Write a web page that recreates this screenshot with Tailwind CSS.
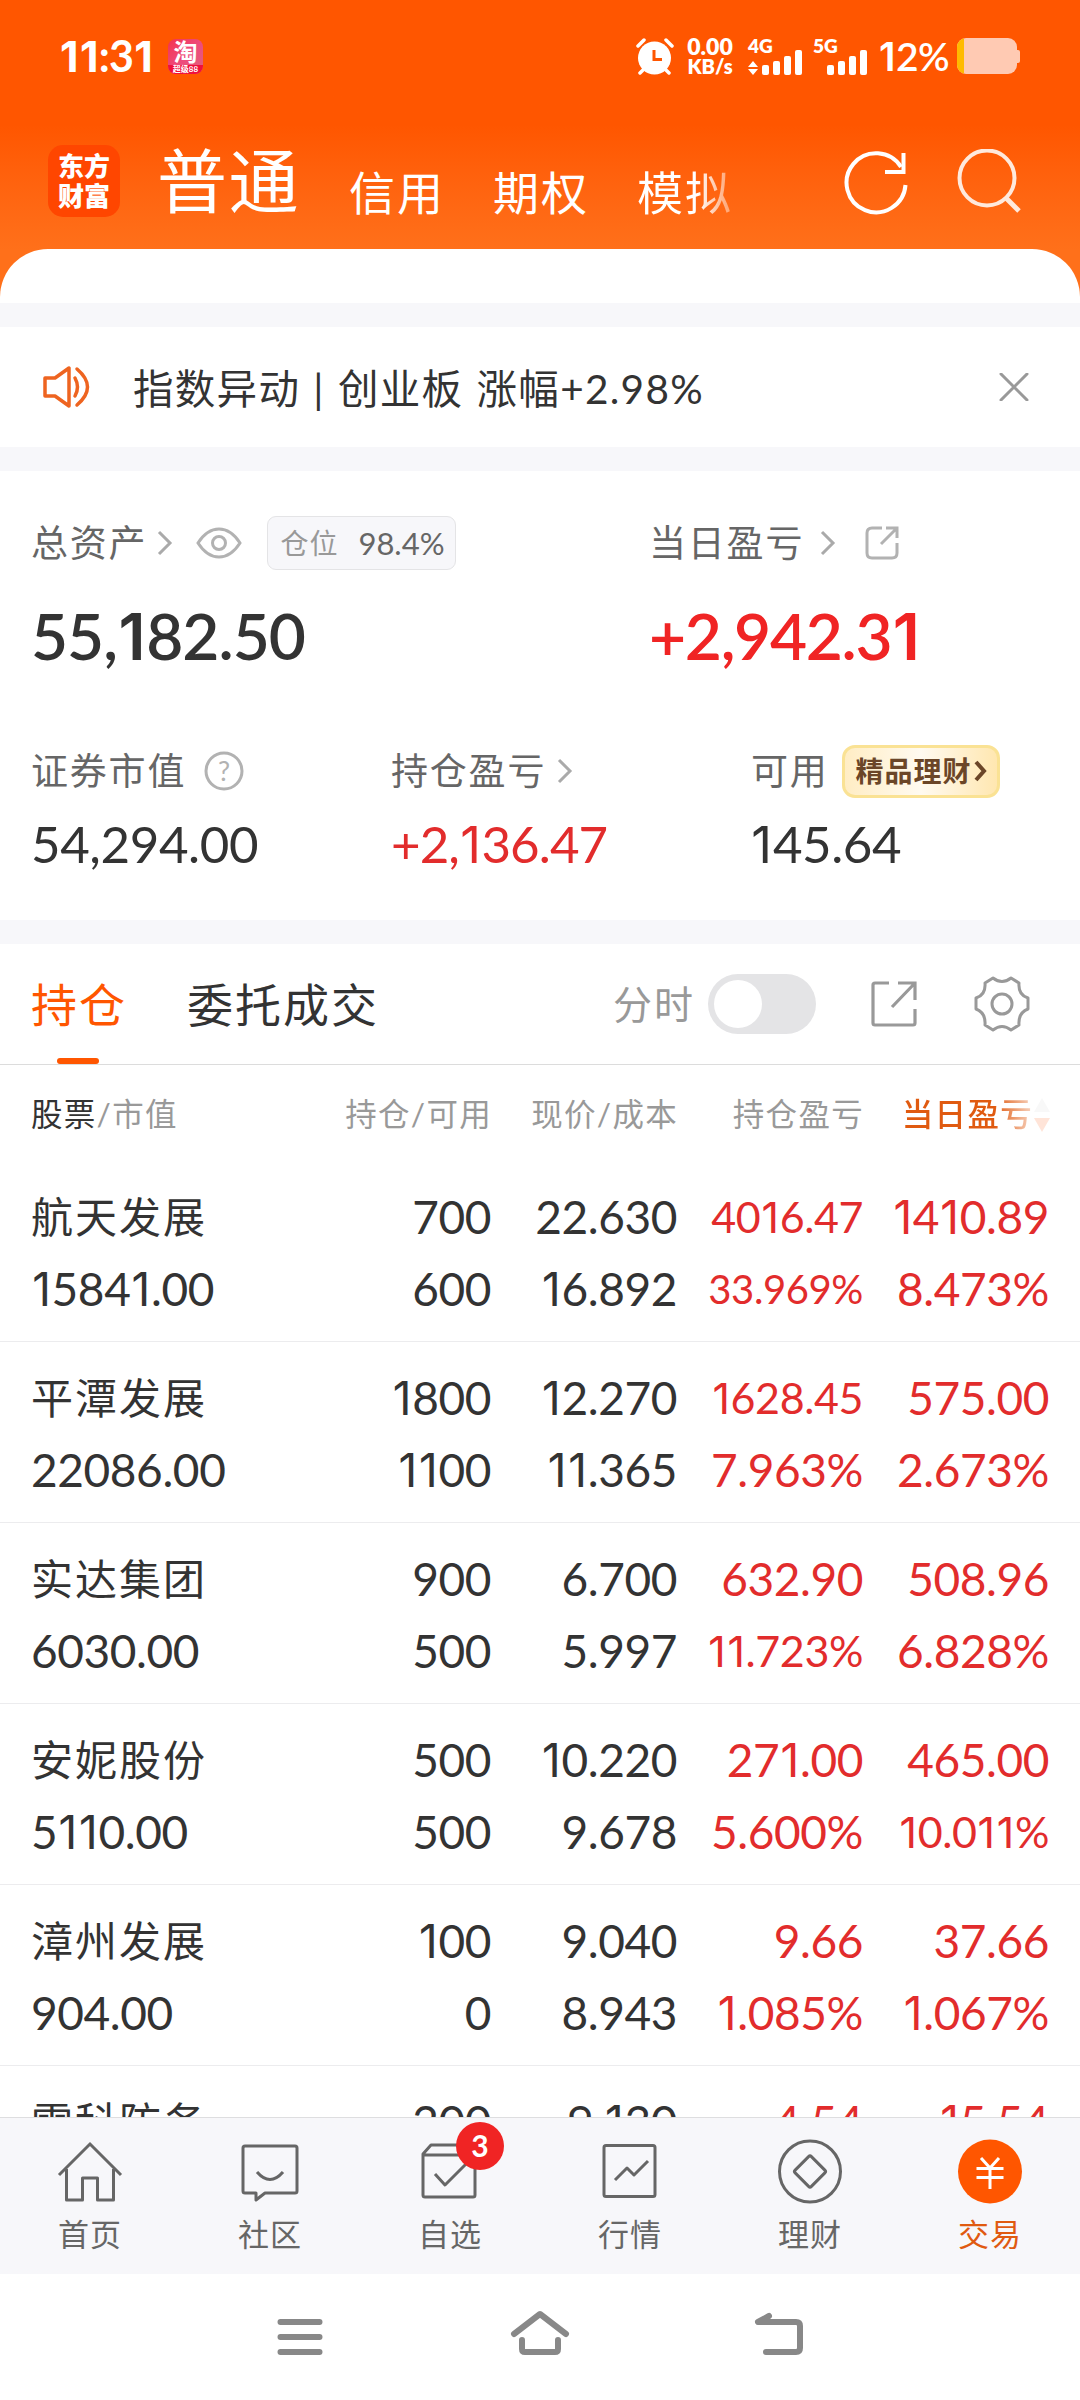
<!DOCTYPE html>
<html lang="zh-CN">
<head>
  <meta charset="UTF-8" />
  <meta name="viewport" content="width=device-width, initial-scale=1.0" />
  <title>交易</title>
  <script src="https://cdn.jsdelivr.net/npm/@tailwindcss/browser@4"></script>
  <style>
    body { font-family: 'Lato', 'Noto Sans CJK SC', sans-serif; }
  </style>
</head>
<body class="w-[1080px] h-[2400px] overflow-hidden bg-white text-[#333] flex flex-col whitespace-nowrap">

  <!-- header -->
  <header class="h-[303px] shrink-0 bg-linear-to-b from-[#ff5600] from-[125px] to-[#ff701a] to-[250px] text-white flex flex-col">
    <div class="h-[112px] pl-[59px] pr-[60px] flex items-center justify-between">
      <div class="flex items-center">
        <span class="num text-[43px] font-bold leading-[56px] w-[109px] tracking-[-0.800px]">11:31</span>
        <div class="w-[35px] h-[35px] rounded-[8px] overflow-hidden bg-linear-to-br from-[#f4304a] via-[#ee4a7c] to-[#e0607a] flex flex-col items-center">
          <span class="text-[24px] leading-[26px] font-bold">淘</span>
          <span class="w-full h-[9px] bg-[#f0103c] text-[8px] leading-[8px] text-center font-bold">超级88</span>
        </div>
      </div>
      <div class="flex items-center">
        <svg class="w-[38px] h-[38px] mr-[12px]" viewBox="0 0 38 38">
          <circle cx="18.500" cy="21" r="16.500" fill="#fff"/>
          <path d="M2 9l6-6M36 9l-6-6M4 36l5-5M33 36l-5-5" stroke="#fff" stroke-width="3.500" stroke-linecap="round"/>
          <path d="M18 13v9.500h8" fill="none" stroke="#ff5600" stroke-width="3"/>
        </svg>
        <div class="w-[48px] mr-[14px] font-extrabold text-center flex flex-col">
          <span class="text-[23px] leading-[21px]">0.00</span>
          <span class="text-[20px] leading-[19px]">KB/s</span>
        </div>
        <svg class="w-[55px] h-[37px] mr-[10px] overflow-visible" viewBox="0 0 55 37" fill="#fff">
          <text x="0" y="15" font-size="19" font-weight="800">4G</text>
          <path d="M5 23l5 6H0zM5 37l5-6H0z"/>
          <rect x="14" y="27" width="7" height="10" rx="2"/><rect x="25" y="23" width="7" height="14" rx="2"/>
          <rect x="36" y="18" width="7" height="19" rx="2"/><rect x="47" y="12" width="7" height="25" rx="2"/>
        </svg>
        <svg class="w-[55px] h-[37px] mr-[10px] overflow-visible" viewBox="0 0 55 37" fill="#fff">
          <text x="0" y="15" font-size="19" font-weight="800">5G</text>
          <rect x="14" y="27" width="7" height="10" rx="2"/><rect x="25" y="23" width="7" height="14" rx="2"/>
          <rect x="36" y="18" width="7" height="19" rx="2"/><rect x="47" y="12" width="7" height="25" rx="2"/>
        </svg>
        <span class="num text-[39px] font-semibold leading-[52px] w-[79px] tracking-[-0.500px]">12%</span>
        <div class="w-[60px] h-[36px] rounded-[9px] overflow-hidden bg-[#ffcab3]"><div class="w-[7px] h-full bg-[#ffbb00]"></div></div>
        <div class="w-[3px] h-[13px] bg-[#ffcab3] rounded-r-[2px]"></div>
      </div>
    </div>
    <div class="h-[137px] pl-[48px] pr-[57px] flex">
      <div class="mt-[33px] w-[72px] h-[72px] rounded-[15px] bg-[#ff4600] text-[26px] leading-[30px] pt-[6px] font-black text-center">东方<br>财富</div>
      <div class="ml-[37px] h-[108px] flex items-end">
        <span class="text-[70px] leading-[78px] tracking-[1.600px] w-[192px]">普通</span>
        <span class="text-[46px] leading-[54px] tracking-[2px] w-[144px]">信用</span>
        <span class="text-[46px] leading-[54px] tracking-[2px] w-[144px]">期权</span>
        <span class="text-[46px] leading-[54px] tracking-[2px] w-[100px] bg-linear-to-r from-white from-60% to-white/45 to-90% bg-clip-text text-transparent">模拟</span>
      </div>
      <svg class="mt-[37px] ml-auto w-[66px] h-[66px]" viewBox="0 0 66 66" fill="none" stroke="#fff" stroke-width="4">
        <path d="M61.500 36A29.500 29.500 0 1 1 57 18"/><path d="M59.500 4v19H41"/>
      </svg>
      <svg class="mt-[37px] ml-[47px] w-[66px] h-[66px]" viewBox="0 0 66 66" fill="none" stroke="#ffe9dc" stroke-width="4">
        <circle cx="30" cy="29" r="27.500"/><path d="M49 49l13 13" stroke-width="5"/>
      </svg>
    </div>
    <div class="h-[54px] bg-white rounded-t-[48px]"></div>
  </header>

  <!-- notice -->
  <section class="shrink-0 border-y-[24px] border-[#f7f7fa] h-[168px] pl-[42px] pr-[51px] flex items-center">
    <svg class="w-[48px] h-[42px]" viewBox="0 0 48 42" fill="none" stroke="#ee6420" stroke-width="3.500" stroke-linejoin="round" stroke-linecap="round">
      <path d="M3 12h10L27 2v38L13 30H3z"/><path d="M33 12q5 9 0 18M35 3q21 18 0 36"/>
    </svg>
    <span class="ml-[43px] pt-[4px] text-[40.500px] tracking-[1.300px] [word-spacing:1.500px]">指数异动 | 创业板 涨幅+2.98%</span>
    <svg class="ml-auto w-[30px] h-[28px]" viewBox="0 0 30 28" stroke="#999" stroke-width="3" stroke-linecap="round"><path d="M2 1l26 26M28 1L2 27"/></svg>
  </section>

  <!-- assets -->
  <section class="shrink-0 h-[449px] pl-[31px] text-[#666] text-[37px] tracking-[1.800px]">
    <div class="flex pt-[44px]">
      <div class="w-[618px]">
        <div class="flex items-center h-[56px]">
          <span>总资产</span>
          <svg class="ml-[10px] w-[16px] h-[26px]" viewBox="0 0 16 26" fill="none" stroke="#aaa" stroke-width="3"><path d="M2 2l11 11L2 24"/></svg>
          <svg class="ml-[23px] w-[46px] h-[32px]" viewBox="0 0 46 32" fill="none" stroke="#b2b2b2" stroke-width="3"><path d="M2 16Q11 2 23 2t21 14Q35 30 23 30T2 16z"/><circle cx="23" cy="16" r="6.500"/></svg>
          <div class="ml-[25px] w-[189px] h-[54px] rounded-[9px] border border-[#e4e4e6] bg-[#f7f7fa] flex items-center pl-[12px] tracking-normal">
            <span class="text-[28px] tracking-[1px] text-[#999] w-[78px]">仓位</span><span class="text-[31px]">98.4%</span>
          </div>
        </div>
        <div class="num mt-[27px] h-[76px] leading-[76px] text-[64px] font-semibold text-[#333] tracking-[-1px]">55,182.50</div>
      </div>
      <div>
        <div class="flex items-center h-[56px]">
          <span>当日盈亏</span>
          <svg class="ml-[16px] w-[16px] h-[26px]" viewBox="0 0 16 26" fill="none" stroke="#aaa" stroke-width="3"><path d="M2 2l11 11L2 24"/></svg>
          <svg class="ml-[29px] w-[34px] h-[34px]" viewBox="0 0 34 34" fill="none" stroke="#b2b2b2" stroke-width="3"><path d="M17 2H7Q2 2 2 7v20q0 5 5 5h20q5 0 5-5V17"/><path d="M21 2h11v10M32 2L16 18"/></svg>
        </div>
        <div class="num mt-[27px] h-[76px] leading-[76px] text-[64px] font-semibold text-[#f02424] tracking-[-1.300px]">+2,942.31</div>
      </div>
    </div>
    <div class="flex mt-[69px]">
      <div class="w-[360px]">
        <div class="flex items-center h-[56px]">
          <span>证券市值</span>
          <svg class="ml-[18px] w-[40px] h-[40px]" viewBox="0 0 40 40"><circle cx="20" cy="20" r="18" fill="none" stroke="#b2b2b2" stroke-width="3"/><text x="20" y="30" font-size="27" text-anchor="middle" fill="#b2b2b2" letter-spacing="0">?</text></svg>
        </div>
        <div class="num mt-[14px] h-[62px] leading-[62px] text-[51px] text-[#333] tracking-[-0.400px]">54,294.00</div>
      </div>
      <div class="w-[360px]">
        <div class="flex items-center h-[56px]">
          <span>持仓盈亏</span>
          <svg class="ml-[11px] w-[16px] h-[26px]" viewBox="0 0 16 26" fill="none" stroke="#aaa" stroke-width="3"><path d="M2 2l11 11L2 24"/></svg>
        </div>
        <div class="num mt-[14px] h-[62px] leading-[62px] text-[51px] text-[#e22c2c] tracking-[-0.900px]">+2,136.47</div>
      </div>
      <div>
        <div class="flex items-center h-[56px]">
          <span>可用</span>
          <div class="ml-[13px] w-[158px] h-[53px] rounded-[13px] border-[3px] border-[#fae294] bg-linear-to-r from-[#ffedc4] via-[#fffaf0] to-[#ffe7b0] flex items-center pl-[11px] text-[28px] font-bold tracking-[1px] text-[#6b4628]">
            精品理财<svg class="ml-[2px] w-[13px] h-[22px]" viewBox="0 0 13 22" fill="none" stroke="#6b4628" stroke-width="4"><path d="M2 2l8 9-8 9"/></svg>
          </div>
        </div>
        <div class="num -ml-[1px] mt-[14px] h-[62px] leading-[62px] text-[51px] text-[#333] tracking-[-0.400px]">145.64</div>
      </div>
    </div>
  </section>

  <!-- positions -->
  <section class="flex-1 min-h-0 overflow-hidden border-t-[24px] border-[#f7f7fa]">
    <div class="h-[121px] border-b border-[#dcdcdc] pl-[31px] pr-[50px] flex items-center text-[46px] tracking-[2px]">
      <div class="h-full w-[156px] text-[#ff5600] flex flex-col">
        <span class="h-[114px] leading-[122px]">持仓</span>
        <span class="ml-[26px] w-[42px] h-[6px] rounded-full bg-[#ff5600]"></span>
      </div>
      <span>委托成交</span>
      <span class="ml-auto text-[39px] text-[#999] tracking-[2px]">分时</span>
      <div class="ml-[13px] w-[108px] h-[60px] rounded-full bg-[#e4e4e6] p-[6px]"><div class="w-[48px] h-[48px] rounded-full bg-white"></div></div>
      <svg class="ml-[54px] w-[48px] h-[48px]" viewBox="0 0 48 48" fill="none" stroke="#999" stroke-width="3.200"><path d="M19 3H5Q3 3 3 5v38q0 2 2 2h38q2 0 2-2V29"/><path d="M28 3h17v17M45 3L22 27"/></svg>
      <svg class="ml-[56px] w-[56px] h-[56px]" viewBox="0 0 56 56" fill="none" stroke="#999" stroke-width="3" stroke-linejoin="round">
        <circle cx="28" cy="28" r="10"/>
        <path d="M19 2Q28 9 37 2L45 7Q44 19 54 22V33Q44 37 45 49L37 54Q28 47 19 54L11 49Q12 37 2 33V22Q12 19 11 7z"/>
      </svg>
    </div>
    <div class="h-[96px] pl-[31px] grid grid-cols-[275px_186px_186px_186px_186px] items-center text-right text-[31.500px] tracking-[1.300px] text-[#999] pt-[3px]">
      <span class="text-left"><span class="text-[#333]">股票</span>/市值</span>
      <span>持仓/可用</span>
      <span>现价/成本</span>
      <span>持仓盈亏</span>
      <div class="flex items-center justify-end">
        <span class="font-medium bg-linear-to-r from-[#e05a10] from-70% to-[#e05a10]/25 bg-clip-text text-transparent">当日盈亏</span>
        <svg class="ml-[1px] w-[16px] h-[36px]" viewBox="0 0 16 36"><path d="M8 1l8 14H0z" fill="#f8f8f8"/><path d="M8 35l8-14H0z" fill="#ffe4d8"/></svg>
      </div>
    </div>
    <div id="rows"></div>
  </section>

  <!-- tab bar -->
  <nav class="shrink-0 h-[157px] border-t border-[#dedee0] bg-[#f7f7fa] grid grid-cols-6 text-[31px] tracking-[1px] text-[#666]">
    <div class="flex flex-col items-center pt-[20px]">
      <svg class="w-[66px] h-[66px]" viewBox="0 0 66 66" fill="none" stroke="#666" stroke-width="3"><path d="M2 37L33 6l31 31"/><path d="M9.500 31v31h16V40h15v22h16V31" stroke-linejoin="round"/></svg>
      <span class="leading-[60px]">首页</span>
    </div>
    <div class="flex flex-col items-center pt-[20px]">
      <svg class="w-[66px] h-[66px]" viewBox="0 0 66 66" fill="none" stroke="#666" stroke-width="3" stroke-linejoin="round"><path d="M8 8h50q2 0 2 2v43q0 2-2 2H28l-9 7v-7H8q-2 0-2-2V10q0-2 2-2z"/><path d="M20 34q13 15 26 0"/></svg>
      <span class="leading-[60px]">社区</span>
    </div>
    <div class="relative flex flex-col items-center pt-[20px]">
      <svg class="w-[66px] h-[66px]" viewBox="0 0 66 66" fill="none" stroke="#666" stroke-width="3" stroke-linejoin="round"><path d="M6 16v41q0 2 2 2h48q2 0 2-2V16L50 7H14zM6 17h52"/><path d="M18 36l10 11 21-21"/></svg>
      <span class="leading-[60px]">自选</span>
      <span class="absolute left-[96px] top-[4px] w-[48px] h-[48px] rounded-full bg-[#f02424] text-white text-[30px] font-bold leading-[47px] text-center tracking-normal">3</span>
    </div>
    <div class="flex flex-col items-center pt-[20px]">
      <svg class="w-[66px] h-[66px]" viewBox="0 0 66 66" fill="none" stroke="#666" stroke-width="3" stroke-linejoin="round"><rect x="7" y="7.500" width="51" height="51" rx="2"/><path d="M18 42l12-12 7 7 14-14"/></svg>
      <span class="leading-[60px]">行情</span>
    </div>
    <div class="flex flex-col items-center pt-[20px]">
      <svg class="w-[66px] h-[66px]" viewBox="0 0 66 66" fill="none" stroke="#666" stroke-width="3" stroke-linejoin="round"><circle cx="33" cy="33.500" r="30.500"/><rect x="21.500" y="22" width="23" height="23" rx="2" transform="rotate(45 33 33.500)"/></svg>
      <span class="leading-[60px]">理财</span>
    </div>
    <div class="flex flex-col items-center pt-[20px] text-[#e05a10]">
      <svg class="w-[66px] h-[66px]" viewBox="0 0 66 66" fill="none" stroke="#fff" stroke-width="3"><circle cx="33" cy="33.500" r="32" fill="#ff5600" stroke="none"/><path d="M24 20l9 10 9-10M19.500 30.500h27M19.500 39.500h27M33 30v21"/></svg>
      <span class="leading-[60px]">交易</span>
    </div>
  </nav>

  <!-- system keys -->
  <div class="shrink-0 h-[126px] flex items-start justify-center pt-[36px] gap-[182px]">
    <svg class="w-[58px] h-[48px]" viewBox="0 0 58 48" stroke="#888" stroke-width="6" stroke-linecap="round"><path d="M9.500 12h39M9.500 27h39M9.500 42h39"/></svg>
    <svg class="w-[58px] h-[48px] overflow-visible" viewBox="0 0 58 48" fill="none" stroke="#888" stroke-width="6" stroke-linecap="round" stroke-linejoin="round"><path d="M3 24L29 4l26 20M11 30v9q0 3 3 3h30q3 0 3-3v-9"/></svg>
    <svg class="w-[58px] h-[48px]" viewBox="0 0 58 48" fill="none" stroke="#888" stroke-width="6" stroke-linecap="round" stroke-linejoin="round"><path d="M18 6L7 12h38q4 0 4 4v22q0 4-4 4H15"/></svg>
  </div>

  <script>
    const big = "text-[46px]", mid = "text-[43px]", small = "text-[40px]";
    // [name, value], [held, available], [price, cost], [profit, %], [today, %]
    const stocks = [
      [["航天发展", "15841.00"], ["700", "600"], ["22.630", "16.892"], ["4016.47", "33.969%", mid, small], ["1410.89", "8.473%"]],
      [["平潭发展", "22086.00"], ["1800", "1100"], ["12.270", "11.365"], ["1628.45", "7.963%", mid], ["575.00", "2.673%"]],
      [["实达集团", "6030.00"], ["900", "500"], ["6.700", "5.997"], ["632.90", "11.723%", big, mid], ["508.96", "6.828%"]],
      [["安妮股份", "5110.00"], ["500", "500"], ["10.220", "9.678"], ["271.00", "5.600%"], ["465.00", "10.011%", big, mid]],
      [["漳州发展", "904.00"], ["100", "0"], ["9.040", "8.943"], ["9.66", "1.085%"], ["37.66", "1.067%"]],
      [["雷科防务", "1826.00"], ["200", "200"], ["9.130", "9.107"], ["4.54", "0.249%"], ["15.54", "0.858%"]],
    ];

    document.getElementById("rows").innerHTML = stocks.map(cols => `
      <div class="h-[181px] border-b border-[#ececee] pl-[31px] pt-[20px] grid grid-cols-[274px_186px_186px_186px_186px] text-right leading-[72px] tracking-[-0.400px]">
        ${cols.map((c, i) => `
          <div class="${i > 2 ? "text-[#e22c2c]" : ""} ${i === 0 ? "text-left" : ""}">
            <div class="h-[72px] ${i === 0 ? "text-[42px] tracking-[2px]" : "num " + (c[2] || big)}">${c[0]}</div>
            <div class="num h-[72px] ${c[3] || big}">${c[1]}</div>
          </div>`).join("")}
      </div>`).join("");

    // Lato's 1 has a foot and a full-width advance, Inter's is plain and narrow
    document.querySelectorAll(".num").forEach(el => {
      el.innerHTML = el.textContent.replace(/1/g, '<span class="font-[Inter] mx-[0.025em]">1</span>');
    });
  </script>
</body>
</html>
